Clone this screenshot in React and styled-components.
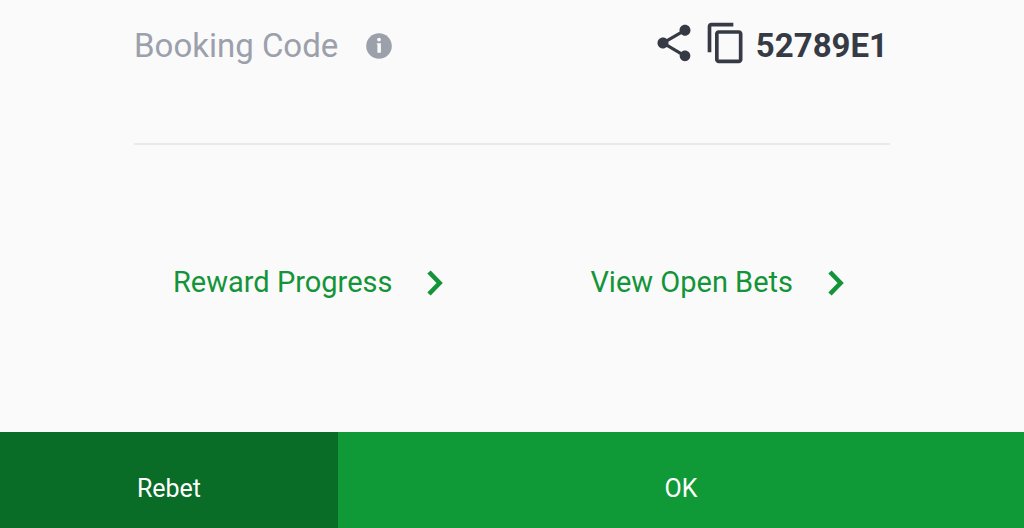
import React from 'react';
import styled, { createGlobalStyle } from 'styled-components';
import { MdShare, MdContentCopy } from 'react-icons/md';

const GlobalStyle = createGlobalStyle`
  * {
    box-sizing: border-box;
  }

  body {
    margin: 0;
    background: #fafafa;
    font-family: Roboto, "Liberation Sans", sans-serif;
  }
`;

const Page = styled.div`
  display: flex;
  flex-direction: column;
  min-height: 100vh;
`;

const Content = styled.main`
  flex: 1;
  padding: 21px 134px 0;
`;

const BookingRow = styled.div`
  display: flex;
  align-items: center;
  justify-content: space-between;
  padding: 0 2px 78px 0;
  border-bottom: 2px solid #e9e9ed;
`;

const Label = styled.div`
  display: flex;
  align-items: center;
  gap: 28px;
  padding-top: 6px;
  font-size: 33px;
  line-height: 38px;
  color: #9ca0ab;
`;

const Code = styled.div`
  display: flex;
  align-items: center;
  gap: 8px;
  color: #353a45;
`;

const CodeText = styled.span`
  padding-top: 6px;
  font-size: 33px;
  font-weight: 700;
  line-height: 38px;
`;

const IconButton = styled.button`
  display: flex;
  padding: 0;
  border: none;
  background: none;
  color: inherit;
  cursor: pointer;
`;

const Links = styled.nav`
  display: flex;
  justify-content: space-between;
  padding: 117px 39px;
`;

const LinkItem = styled.a`
  display: flex;
  align-items: center;
  gap: 28px;
  font-size: 29px;
  line-height: 40px;
  color: #149439;
  text-decoration: none;
`;

const Footer = styled.footer`
  display: flex;
`;

const FooterButton = styled.button`
  flex: ${(props) => (props.$primary ? '67' : '33')} 0 0;
  padding: 37px 0 19px;
  border: none;
  background: ${(props) => (props.$primary ? '#0f9937' : '#096c27')};
  color: #fff;
  font-family: inherit;
  font-size: 25px;
  line-height: 40px;
  cursor: pointer;
`;

const InfoIcon = () => (
  <svg width="26" height="26" viewBox="0 0 26 26" aria-hidden="true">
    <circle cx="13" cy="13" r="12.8" fill="currentColor" />
    <circle cx="13" cy="6.6" r="1.9" fill="#fafafa" />
    <path d="M10.8 10.2h4.1v9.6h-3.5v-8.2h-.6z" fill="#fafafa" />
  </svg>
);

const Chevron = () => (
  <svg width="30" height="30" viewBox="0 0 30 30" aria-hidden="true">
    <path d="M9 5l10.6 11L9 27" fill="none" stroke="currentColor" strokeWidth="4.6" />
  </svg>
);

const App = () => {
  return (
    <Page>
      <GlobalStyle />
      <Content>
        <BookingRow>
          <Label>
            Booking Code
            <IconButton aria-label="About booking codes"><InfoIcon /></IconButton>
          </Label>
          <Code>
            <IconButton aria-label="Share"><MdShare size={44} /></IconButton>
            <IconButton aria-label="Copy"><MdContentCopy size={44} /></IconButton>
            <CodeText>52789E1</CodeText>
          </Code>
        </BookingRow>
        <Links>
          <LinkItem href="#rewards">Reward Progress<Chevron /></LinkItem>
          <LinkItem href="#open-bets">View Open Bets<Chevron /></LinkItem>
        </Links>
      </Content>
      <Footer>
        <FooterButton>Rebet</FooterButton>
        <FooterButton $primary>OK</FooterButton>
      </Footer>
    </Page>
  );
};

export default App;
